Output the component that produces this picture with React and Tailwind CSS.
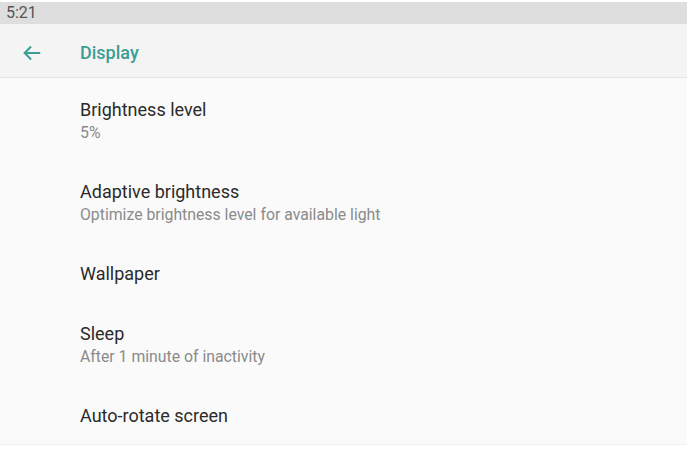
import React from "react";

const items = [
  { title: "Brightness level", summary: "5%" },
  { title: "Adaptive brightness", summary: "Optimize brightness level for available light" },
  { title: "Wallpaper" },
  { title: "Sleep", summary: "After 1 minute of inactivity" },
  { title: "Auto-rotate screen" },
];

const SettingRow = ({ title, summary }) => (
  <div
    className={`flex flex-col justify-center pl-[80px] ${summary ? "h-[82px] pt-[4px]" : "h-[60px] pt-[2px]"}`}
  >
    <div className="text-[18px] leading-[23px] text-[#2a2a2a]">{title}</div>
    {summary && <div className="text-[15.8px] leading-[23px] text-[#8a8a8a]">{summary}</div>}
  </div>
);

export default function App() {
  return (
    <div className="flex h-[449px] w-[687px] flex-col overflow-hidden bg-white font-['Roboto',sans-serif]">
      {/* status bar */}
      <div className="mt-[2px] flex h-[22px] items-center bg-[#dedede] pl-[6px] text-[16px] text-[#555]">
        5:21
      </div>

      {/* toolbar */}
      <div className="flex h-[54px] items-center border-b border-[#e4e4e4] bg-[#f4f4f4] pt-[4px] shadow-[0_1px_2px_rgba(0,0,0,0.06)]">
        <div className="flex w-[80px] items-center pl-[21px]">
          <svg width="22" height="22" viewBox="0 0 24 24" fill="none">
            <path d="M21 12H4.5M11 5l-7 7 7 7" stroke="#3a9e94" strokeWidth="2.2" />
          </svg>
        </div>
        <div className="text-[18px] font-medium text-[#3a9e94]">Display</div>
      </div>

      {/* list */}
      <div className="bg-[#fafafa] border-b border-[#f0f0f0]">
        {items.map((item) => (
          <SettingRow key={item.title} {...item} />
        ))}
      </div>
    </div>
  );
}
